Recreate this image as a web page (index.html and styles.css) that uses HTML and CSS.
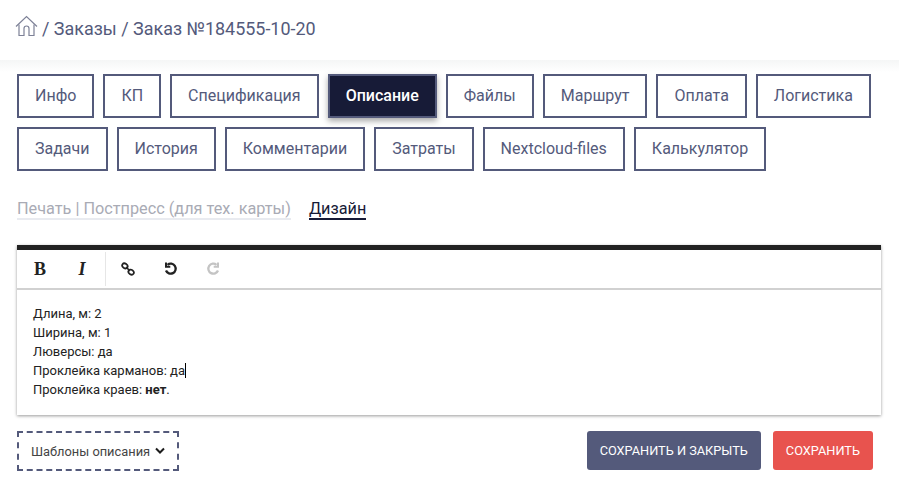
FILE: index.html
```html
<!DOCTYPE html>
<html lang="ru">
<head>
    <meta charset="UTF-8">
    <title>Заказ №184555-10-20</title>
    <link rel="stylesheet" href="styles.css">
</head>
<body>
    <header class="topbar">
        <svg class="home-icon" width="24" height="22" viewBox="0 0 24 22" fill="none" stroke="#7d8197" stroke-width="1.2">
            <path d="M1 11.5 11.5 1.5 22 11.5"/>
            <path d="M4 9.5V20.5H9V13.5Q9 11 11.5 11T14 13.5V20.5H19V9.5"/>
        </svg>
        <span class="crumbs">/ Заказы / Заказ №184555-10-20</span>
    </header>
    <main class="content">
        <nav class="tabs">
            <a class="tab">Инфо</a>
            <a class="tab">КП</a>
            <a class="tab">Спецификация</a>
            <a class="tab active">Описание</a>
            <a class="tab">Файлы</a>
            <a class="tab">Маршрут</a>
            <a class="tab">Оплата</a>
            <a class="tab">Логистика</a>
            <a class="tab">Задачи</a>
            <a class="tab">История</a>
            <a class="tab">Комментарии</a>
            <a class="tab">Затраты</a>
            <a class="tab">Nextcloud-files</a>
            <a class="tab">Калькулятор</a>
        </nav>
        <div class="subtabs">
            <a class="subtab">Печать | Постпресс (для тех. карты)</a>
            <a class="subtab current">Дизайн</a>
        </div>
        <section class="editor">
            <div class="toolbar">
                <div class="tool-group">
                    <button class="tool tool-b">B</button>
                    <button class="tool tool-i">I</button>
                </div>
                <div class="tool-group">
                    <button class="tool">
                        <svg width="14" height="14" viewBox="0 0 14 14" fill="none" stroke="#222" stroke-width="1.7">
                            <ellipse cx="3.9" cy="3.9" rx="2.9" ry="2.3" transform="rotate(35 3.9 3.9)"/>
                            <ellipse cx="10.1" cy="10.1" rx="2.9" ry="2.3" transform="rotate(35 10.1 10.1)"/>
                            <path d="M5 5 9 9"/>
                        </svg>
                    </button>
                    <button class="tool">
                        <svg class="history-icon" width="14" height="14" viewBox="0 0 14 14" fill="none" stroke="#222" stroke-width="2.3">
                            <path d="M3.5 2.8A5 5 0 1 1 2 8.5"/>
                            <path d="M2 .5V4.8H6.3" stroke-width="2"/>
                        </svg>
                    </button>
                    <button class="tool">
                        <svg class="history-icon" width="14" height="14" viewBox="0 0 14 14" fill="none" stroke="#c4c4c4" stroke-width="2.3">
                            <path d="M10.5 2.8A5 5 0 1 0 12 8.5"/>
                            <path d="M12 .5V4.8H7.7" stroke-width="2"/>
                        </svg>
                    </button>
                </div>
            </div>
            <div class="editor-body">
                <p>Длина, м: 2</p>
                <p>Ширина, м: 1</p>
                <p>Люверсы: да</p>
                <p>Проклейка карманов: да<span class="caret"></span></p>
                <p>Проклейка краев: <b>нет</b>.</p>
            </div>
        </section>
        <div class="actions">
            <button class="templates">Шаблоны описания
                <svg width="10" height="8" viewBox="0 0 10 8" fill="none" stroke="#1c1c1c" stroke-width="2">
                    <path d="M1 1.5 5 5.5 9 1.5"/>
                </svg>
            </button>
            <div class="save-group">
                <button class="btn btn-dark">Сохранить и закрыть</button>
                <button class="btn btn-red">Сохранить</button>
            </div>
        </div>
    </main>
</body>
</html>
```

FILE: styles.css
```css
*{
    margin: 0;
    padding: 0;
    box-sizing: border-box;
}
html, body{
    height: 100%;
}
body{
    font-family: Roboto, "Liberation Sans", sans-serif;
    background: #fff;
    overflow: hidden;
}
.topbar{
    height: 60px;
    padding: 0 0 4px 15px;
    display: flex;
    align-items: center;
    gap: 3px;
}
.home-icon{
    margin-bottom: 5px;
}
.crumbs{
    font-size: 17.95px;
    color: #545a7b;
}
.content{
    padding: 14px 17px 0;
    background: linear-gradient(#f5f6f6, #fff 12px);
}
.tabs{
    display: flex;
    flex-wrap: wrap;
    gap: 9px;
}
.tab{
    height: 44px;
    padding: 0 16px;
    border: 2px solid #545a7b;
    background: #fff;
    color: #545a7b;
    font-size: 16px;
    line-height: 40px;
}
.tab.active{
    background: #171b37;
    color: #fff;
    font-weight: 500;
    box-shadow: 0 3px 6px rgba(0,0,0,0.35);
}
.subtabs{
    display: flex;
    gap: 18px;
    margin-top: 27px;
}
.subtab{
    padding-top: 2px;
    font-size: 16.25px;
    line-height: 18px;
    color: #a9abb5;
    border-bottom: 2px solid #e9ebf0;
}
.subtab.current{
    color: #171b37;
    border-bottom-color: #171b37;
}
.editor{
    width: 864px;
    height: 170px;
    margin-top: 25px;
    border-top: 5px solid #222;
    background: #fff;
    box-shadow: 0 1px 3px rgba(0,0,0,0.4);
}
.toolbar{
    height: 40px;
    display: flex;
    align-items: center;
    border-bottom: 2px solid #d1d1d1;
}
.tool-group{
    display: flex;
    height: 34px;
    padding: 0 2px;
    border-right: 1px solid #e6e6e6;
}
.tool-group:last-child{
    padding: 0 1px;
    border-right: 0;
}
.tool{
    width: 42px;
    height: 34px;
    border: 0;
    background: none;
    display: flex;
    align-items: center;
    justify-content: center;
    font-family: "Liberation Serif", serif;
    font-size: 18px;
    color: #222;
}
.tool-b{
    font-weight: bold;
}
.tool-i{
    font-style: italic;
    font-weight: bold;
}
.history-icon{
    margin-left: 2px;
}
.editor-body{
    padding: 14px 16px;
    font-size: 13px;
    line-height: 19px;
    color: #222;
}
.caret{
    display: inline-block;
    width: 1px;
    height: 15px;
    background: #000;
    vertical-align: -3px;
}
.actions{
    display: flex;
    justify-content: space-between;
    align-items: flex-start;
    width: 856px;
    margin-top: 16px;
}
.templates{
    width: 162px;
    height: 40px;
    border: 2px dashed #545a7b;
    background: #fff;
    font-family: inherit;
    font-size: 12.85px;
    color: #444;
    display: flex;
    align-items: center;
    justify-content: center;
    gap: 5px;
}
.save-group{
    display: flex;
    gap: 12px;
}
.btn{
    height: 39px;
    padding: 0 13px;
    border: 0;
    border-radius: 3px;
    color: #fff;
    font-family: inherit;
    font-size: 12.75px;
    text-transform: uppercase;
}
.btn-dark{
    background: #545a7b;
}
.btn-red{
    background: #e8534e;
}
```
